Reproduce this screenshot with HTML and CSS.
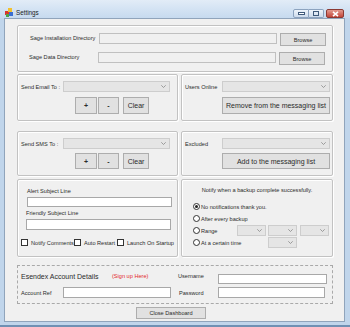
FILE: index.html
```html
<!DOCTYPE html>
<html>
<head>
<meta charset="utf-8">
<link rel="stylesheet" href="styles.css">
</head>
<body>
<div class="window">
  <div class="titlebar">
    <svg class="appicon" width="8" height="9" viewBox="0 0 8 9">
      <rect x="0" y="3" width="4" height="4" fill="#d9362b"/>
      <rect x="3" y="0" width="4" height="4" fill="#f2c12e"/>
      <rect x="4" y="4" width="4" height="4" fill="#3b6fd1"/>
      <rect x="1" y="6" width="3" height="3" fill="#4aa34a"/>
    </svg>
    <span class="title">Settings</span>
    <div class="caption-btns">
      <div class="cbtn cmin"><svg width="7" height="3" viewBox="0 0 7 3"><rect x="0.5" y="0.5" width="6" height="2" fill="#fff" stroke="#3f5a7a" stroke-width="1"/></svg></div>
      <div class="cbtn cmax"><svg width="6" height="5" viewBox="0 0 6 5"><rect x="0.5" y="0.5" width="5" height="4" fill="none" stroke="#3f5a7a" stroke-width="1"/></svg></div>
      <div class="cbtn cclose"><svg width="7" height="6" viewBox="0 0 7 6"><path d="M1 0.8 L6 5.2 M6 0.8 L1 5.2" stroke="#fff" stroke-width="1.6"/></svg></div>
    </div>
  </div>
  <div class="frame">
    <div class="client">

      <div class="group g-dirs">
        <div class="dir-row">
          <span class="lbl">Sage Installation Directory</span>
          <div class="tb ro"></div>
          <div class="btn">Browse</div>
        </div>
        <div class="dir-row shift">
          <span class="lbl">Sage Data Directory</span>
          <div class="tb ro"></div>
          <div class="btn">Browse</div>
        </div>
      </div>

      <div class="row r-email">
        <div class="group gl">
          <div class="combo-row">
            <span class="lbl w42">Send Email To :</span>
            <div class="combo w107"><svg width="5" height="3" viewBox="0 0 5 3"><path d="M0.3 0.3 L2.5 2.5 L4.7 0.3" fill="none" stroke="#888" stroke-width="0.8"/></svg></div>
          </div>
          <div class="btn-row top5">
            <div class="btn big bplus">+</div>
            <div class="btn big bminus">-</div>
            <div class="btn big bclear">Clear</div>
          </div>
        </div>
        <div class="group gr">
          <div class="combo-row">
            <span class="lbl w37">Users Online</span>
            <div class="combo w108"><svg width="5" height="3" viewBox="0 0 5 3"><path d="M0.3 0.3 L2.5 2.5 L4.7 0.3" fill="none" stroke="#888" stroke-width="0.8"/></svg></div>
          </div>
          <div class="btn big wide top5">Remove from the messaging list</div>
        </div>
      </div>

      <div class="row r-sms">
        <div class="group gl">
          <div class="combo-row">
            <span class="lbl w42">Send SMS To :</span>
            <div class="combo w107"><svg width="5" height="3" viewBox="0 0 5 3"><path d="M0.3 0.3 L2.5 2.5 L4.7 0.3" fill="none" stroke="#888" stroke-width="0.8"/></svg></div>
          </div>
          <div class="btn-row top4">
            <div class="btn big bplus h16">+</div>
            <div class="btn big bminus h16">-</div>
            <div class="btn big bclear h16">Clear</div>
          </div>
        </div>
        <div class="group gr">
          <div class="combo-row">
            <span class="lbl w37">Excluded</span>
            <div class="combo w108"><svg width="5" height="3" viewBox="0 0 5 3"><path d="M0.3 0.3 L2.5 2.5 L4.7 0.3" fill="none" stroke="#888" stroke-width="0.8"/></svg></div>
          </div>
          <div class="btn big wide top4 h16">Add to the messaging list</div>
        </div>
      </div>

      <div class="row r-alert">
        <div class="group gl alert">
          <span class="lbl a-l1">Alert Subject Line</span>
          <div class="tb a-tb1"></div>
          <span class="lbl a-l2">Friendly Subject Line</span>
          <div class="tb a-tb2"></div>
          <div class="check-row">
            <div class="chk c1"><span class="box"></span><span class="lbl">Notify Comments</span></div>
            <div class="chk c2"><span class="box"></span><span class="lbl">Auto Restart</span></div>
            <div class="chk c3"><span class="box"></span><span class="lbl">Launch On Startup</span></div>
          </div>
        </div>
        <div class="group gr notify">
          <div class="n-title">Notify when a backup complete successfully.</div>
          <div class="radio-row first">
            <div class="radio"><span class="dot on"><i></i></span><span class="lbl">No notifications thank you.</span></div>
          </div>
          <div class="radio-row">
            <div class="radio"><span class="dot"></span><span class="lbl">After every backup</span></div>
          </div>
          <div class="radio-row">
            <div class="radio w44"><span class="dot"></span><span class="lbl">Range</span></div>
            <div class="combo w29"><svg width="5" height="3" viewBox="0 0 5 3"><path d="M0.3 0.3 L2.5 2.5 L4.7 0.3" fill="none" stroke="#888" stroke-width="0.8"/></svg></div>
            <div class="combo w29 ml2"><svg width="5" height="3" viewBox="0 0 5 3"><path d="M0.3 0.3 L2.5 2.5 L4.7 0.3" fill="none" stroke="#888" stroke-width="0.8"/></svg></div>
            <div class="combo w29 ml3"><svg width="5" height="3" viewBox="0 0 5 3"><path d="M0.3 0.3 L2.5 2.5 L4.7 0.3" fill="none" stroke="#888" stroke-width="0.8"/></svg></div>
          </div>
          <div class="radio-row">
            <div class="radio w75"><span class="dot"></span><span class="lbl">At a certain time</span></div>
            <div class="combo w29"><svg width="5" height="3" viewBox="0 0 5 3"><path d="M0.3 0.3 L2.5 2.5 L4.7 0.3" fill="none" stroke="#888" stroke-width="0.8"/></svg></div>
          </div>
        </div>
      </div>

      <div class="esendex">
        <div class="e-head">
          <span class="e-title">Esendex Account Details</span>
          <span class="signup">(Sign up Here)</span>
        </div>
        <span class="lbl e-user">Username</span>
        <div class="tb e-tbu"></div>
        <span class="lbl e-ref">Account Ref</span>
        <div class="tb e-tbr"></div>
        <span class="lbl e-pass">Password</span>
        <div class="tb e-tbp"></div>
      </div>

      <div class="btn close-dash">Close Dashboard</div>
    </div>
  </div>
</div>
</body>
</html>
```

FILE: styles.css
```css
* { box-sizing: border-box; }
html, body { margin: 0; padding: 0; }
body {
  width: 350px;
  height: 327px;
  overflow: hidden;
  font-family: "Liberation Sans", Arial, sans-serif;
  font-size: 5.6px;
  color: #2b2b2b;
}
.window {
  width: 350px;
  height: 327px;
  display: flex;
  flex-direction: column;
  background: #c0d5eb;
  border-bottom: 2px solid #6f90b3;
}
.titlebar {
  height: 18px;
  flex: none;
  display: flex;
  align-items: flex-start;
  padding: 8px 6px 0 5px;
  background: linear-gradient(#e2ecf7, #c6daef);
}
.appicon { flex: none; }
.title {
  margin-left: 3px;
  font-size: 6.3px;
  line-height: 10px;
  color: #1a1a1a;
}
.caption-btns {
  margin-left: auto;
  margin-top: 1px;
  display: flex;
}
.cbtn {
  height: 9px;
  display: flex;
  align-items: center;
  justify-content: center;
  border: 1px solid #8ca3bf;
  background: linear-gradient(#eef4fb, #cddbeb);
}
.cmin { width: 16px; border-radius: 2px 0 0 2px; }
.cmax { width: 15px; border-left: none; border-radius: 0 2px 2px 0; }
.cclose {
  width: 18px;
  margin-left: 2px;
  border-color: #8b3a33;
  border-radius: 2px;
  background: linear-gradient(#e39a8f, #c2463a);
}
.frame {
  flex: 1;
  display: flex;
  padding: 0 5px 3px 4px;
}
.client {
  width: 341px;
  height: 304px;
  border: 1px solid #90a4bb;
  background: #f0f0f0;
  display: flex;
  flex-direction: column;
  align-items: flex-start;
  padding: 6px 0 0 12px;
}
.group {
  border: 1px solid #c2c2c2;
  border-radius: 2px;
  box-shadow: inset 1px 1px 0 #fff, 1px 1px 0 #fff;
}
.lbl { white-space: nowrap; line-height: 10px; }

/* text boxes, combos, buttons */
.tb {
  background: #fff;
  border: 1px solid #a8a8a8;
  height: 11px;
}
.tb.ro { background: #f0f0f0; border-color: #c0c0c0; }
.combo {
  height: 11px;
  background: #e5e5e5;
  border: 1px solid #cdcdcd;
  display: flex;
  align-items: center;
  justify-content: flex-end;
  padding-right: 3px;
  flex: none;
}
.w107 { width: 107px; }
.w108 { width: 108px; }
.w29 { width: 29px; }
.ml2 { margin-left: 2px; }
.ml3 { margin-left: 3px; }
.btn {
  background: #e1e1e1;
  border: 1px solid #adadad;
  display: flex;
  align-items: center;
  justify-content: center;
  white-space: nowrap;
  flex: none;
}
.btn.big { font-size: 7px; height: 17px; }
.btn.h16 { height: 16px; }
.top5 { margin-top: 5px; }
.top4 { margin-top: 4px; }

/* Sage directories */
.g-dirs {
  width: 316px;
  height: 47px;
  padding: 7px 0 0 12px;
  display: flex;
  flex-direction: column;
  gap: 6px;
}
.dir-row {
  display: grid;
  grid-template-columns: 69px 178px 46px;
  align-items: start;
}
.dir-row.shift { margin-left: -1px; }
.dir-row .lbl { line-height: 11px; }
.dir-row .btn { height: 13px; margin-left: 3px; width: 46px; }
.dir-row .tb { width: 178px; }

/* rows of paired groups */
.row { display: flex; gap: 3px; }
.r-email { margin-top: 2px; }
.r-email .group { height: 47px; }
.r-sms { margin-top: 10px; }
.r-sms .group { height: 45px; }
.r-alert { margin-top: 3px; }
.r-alert .group { height: 78px; }
.gl { width: 161px; padding: 6px 0 0 3px; }
.gr { width: 152px; padding: 6px 0 0 3px; }
.combo-row { display: flex; align-items: center; }
.w42 { width: 42px; }
.w37 { width: 37px; }
.btn-row { display: flex; }
.bplus { width: 22px; margin-left: 54px; font-weight: bold; font-size: 8px; }
.bminus { width: 21px; margin-left: 1px; font-weight: bold; font-size: 8px; }
.bclear { width: 26px; margin-left: 4px; }
.wide { width: 108px; margin-left: 37px; }

/* alert group */
.alert { display: flex; flex-direction: column; align-items: flex-start; }
.a-l1 { margin-left: 6px; }
.a-tb1 { margin-left: 6px; margin-top: 1px; width: 145px; height: 10px; }
.a-l2 { margin-left: 5px; margin-top: 1px; }
.a-tb2 { margin-left: 5px; margin-top: 1px; width: 145px; height: 11px; }
.check-row { display: flex; align-items: center; margin-top: 8px; height: 9px; }
.chk { display: flex; align-items: center; flex: none; }
.chk .box {
  width: 7px; height: 7px;
  background: #fff;
  border: 1px solid #333;
  margin-right: 3px;
  flex: none;
}
.c1 { width: 53px; }
.c2 { width: 43px; }

/* notify group */
.notify { display: flex; flex-direction: column; padding: 5px 0 0 11px; }
.n-title { text-align: center; line-height: 10px; margin-left: -11px; white-space: nowrap; }
.radio-row { display: flex; align-items: center; height: 11px; margin-top: 1px; }
.radio-row.first { margin-top: 6px; }
.radio { display: flex; align-items: center; flex: none; }
.w44 { width: 44px; }
.w75 { width: 75px; }
.dot {
  width: 7px; height: 7px;
  border-radius: 50%;
  border: 1px solid #333;
  background: #fff;
  margin-right: 1px;
  display: flex;
  align-items: center;
  justify-content: center;
  flex: none;
}
.dot i { width: 3px; height: 3px; border-radius: 50%; background: #222; display: block; }

/* esendex */
.esendex {
  margin-top: 8px;
  width: 316px;
  height: 39px;
  border: 1px dashed #a9a9a9;
  padding: 6px 0 0 3px;
  display: grid;
  grid-template-columns: 42px 108px 47px 109px;
  grid-template-rows: 12px 11px;
  row-gap: 3px;
}
.e-head { grid-column: 1 / 3; grid-row: 1; display: flex; align-items: flex-start; }
.e-title { font-size: 7px; line-height: 9px; width: 91px; white-space: nowrap; }
.signup { color: #e3262c; line-height: 9px; white-space: nowrap; }
.e-user { grid-column: 3; grid-row: 1; padding-left: 7px; line-height: 9px; }
.e-tbu { grid-column: 4; grid-row: 1; align-self: end; height: 10px; }
.e-ref { grid-column: 1; grid-row: 2; align-self: center; }
.e-tbr { grid-column: 2; grid-row: 2; }
.e-pass { grid-column: 3; grid-row: 2; padding-left: 8px; align-self: center; }
.e-tbp { grid-column: 4; grid-row: 2; width: 107px; }

.close-dash {
  margin-top: 3px;
  margin-left: 119px;
  width: 70px;
  height: 12px;
}
```
